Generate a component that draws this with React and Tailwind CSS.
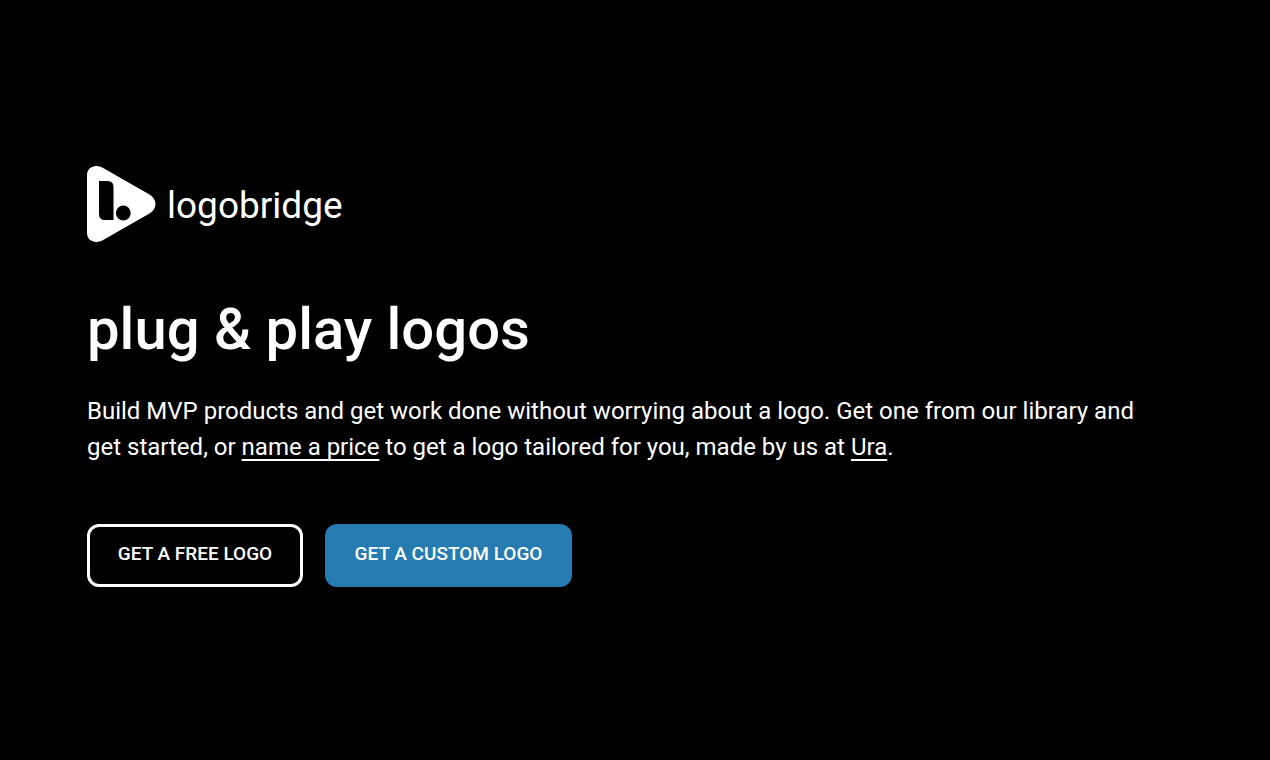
function LogoMark() {
  return (
    <svg className="h-[76px] w-[69px] shrink-0" viewBox="0 0 69 76" aria-hidden="true">
      <path
        fill="#fff"
        d="M0 9.500C0 3.500 4 0 9.500 0C12.500 0 14.500 1 17 2.500L62.500 28.500C66.500 31 68.500 34.500 68.500 38S66.500 45 62.500 47.500L17 73.500C14.500 75 12.500 76 9.500 76C4 76 0 72.500 0 66.500Z"
      />
      <path fill="#000" d="M12 15H20.500Q26.500 15 26.500 21V54H18Q12 54 12 48Z" />
      <circle cx="36.300" cy="47" r="7.400" fill="#000" />
    </svg>
  );
}

const linkStyle = "underline decoration-2 underline-offset-4 [text-decoration-skip-ink:none]";

export default function App() {
  return (
    <main className="flex min-h-screen items-center bg-black px-[87px] font-['Roboto',sans-serif] text-white">
      <div className="w-full pb-2">
        <a href="#" aria-label="logobridge" className="flex w-fit items-center gap-[11px]">
          <LogoMark />
          <span className="pt-1 text-[37px] leading-10">logobridge</span>
        </a>
        <h1 className="mt-[52px] text-[58px] leading-[70px] font-medium">plug &amp; play logos</h1>
        <p className="mt-[29px] max-w-[1070px] text-2xl leading-9">
          Build MVP products and get work done without worrying about a logo. Get one from our
          library and get started, or{" "}
          <a href="#price" className={linkStyle}>name a price</a> to get a logo
          tailored for you, made by us at{" "}
          <a href="#ura" className={linkStyle}>Ura</a>.
        </p>
        <div className="mt-[59px] flex flex-wrap gap-[22px]">
          <button type="button" className="h-[63px] w-[216px] rounded-xl border-3 border-white pb-[2px] text-[19px] font-medium">
            GET A FREE LOGO
          </button>
          <button type="button" className="h-[63px] w-[247px] rounded-xl bg-[#267bb0] pb-[2px] text-[19px] font-medium">
            GET A CUSTOM LOGO
          </button>
        </div>
      </div>
    </main>
  );
}
